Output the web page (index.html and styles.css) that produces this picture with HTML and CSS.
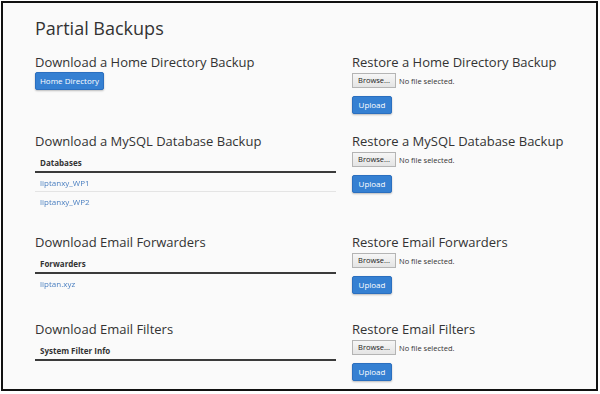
FILE: index.html
```html
<!DOCTYPE html>
<html lang="en">
<head>
<meta charset="utf-8">
<title>Partial Backups</title>
<link rel="stylesheet" href="styles.css">
</head>
<body>
<div class="frame">
  <h1 class="title">Partial Backups</h1>
  <div class="grid">
    <section class="sect">
      <h2 class="sect-title">Download a Home Directory Backup</h2>
      <button class="btn btn-home">Home Directory</button>
    </section>
    <section class="sect">
      <h2 class="sect-title">Restore a Home Directory Backup</h2>
      <div class="file-row"><span class="browse">Browse...</span><span class="no-file">No file selected.</span></div>
      <button class="btn btn-upload">Upload</button>
    </section>

    <section class="sect">
      <h2 class="sect-title">Download a MySQL Database Backup</h2>
      <table class="list">
        <thead><tr><th>Databases</th></tr></thead>
        <tbody>
          <tr><td><a class="link" href="#db1">liptanxy_WP1</a></td></tr>
          <tr><td><a class="link" href="#db2">liptanxy_WP2</a></td></tr>
        </tbody>
      </table>
    </section>
    <section class="sect">
      <h2 class="sect-title">Restore a MySQL Database Backup</h2>
      <div class="file-row"><span class="browse">Browse...</span><span class="no-file">No file selected.</span></div>
      <button class="btn btn-upload">Upload</button>
    </section>

    <section class="sect sect-mid">
      <h2 class="sect-title">Download Email Forwarders</h2>
      <table class="list">
        <thead><tr><th>Forwarders</th></tr></thead>
        <tbody>
          <tr><td><a class="link" href="#fwd">liptan.xyz</a></td></tr>
        </tbody>
      </table>
    </section>
    <section class="sect sect-mid">
      <h2 class="sect-title">Restore Email Forwarders</h2>
      <div class="file-row"><span class="browse">Browse...</span><span class="no-file">No file selected.</span></div>
      <button class="btn btn-upload">Upload</button>
    </section>

    <section class="sect sect-end">
      <h2 class="sect-title">Download Email Filters</h2>
      <table class="list">
        <thead><tr><th>System Filter Info</th></tr></thead>
        <tbody></tbody>
      </table>
    </section>
    <section class="sect sect-end">
      <h2 class="sect-title">Restore Email Filters</h2>
      <div class="file-row"><span class="browse">Browse...</span><span class="no-file">No file selected.</span></div>
      <button class="btn btn-upload">Upload</button>
    </section>
  </div>
</div>
</body>
</html>
```
FILE: styles.css
```css
html, body {
  margin: 0;
  padding: 0;
  background: #ffffff;
}

body {
  font-family: "Open Sans", "Liberation Sans", sans-serif;
  color: #333333;
}

.frame {
  box-sizing: border-box;
  margin: 1px;
  width: 597px;
  height: 390px;
  border: 2px solid #111111;
  background: #fafafa;
  padding: 13px 0 0 32px;
  overflow: hidden;
}

.title {
  margin: 0;
  font-size: 18px;
  line-height: 24px;
  font-weight: 400;
  color: #333333;
}

.grid {
  margin-top: 13px;
  display: grid;
  grid-template-columns: 301px 230px;
  column-gap: 16px;
  row-gap: 18px;
  align-items: start;
}

.sect {
  display: flex;
  flex-direction: column;
  align-items: flex-start;
}

.sect-mid {
  margin-top: 5px;
}

.sect-end {
  margin-top: 8px;
}

.sect-title {
  margin: 0;
  font-size: 13px;
  line-height: 18px;
  font-weight: 400;
  color: #333333;
  white-space: nowrap;
}

.btn {
  font-family: "Open Sans", "Liberation Sans", sans-serif;
  font-size: 8px;
  color: #ffffff;
  background: #3580d2;
  border: 1px solid #2b6fbf;
  border-radius: 2px;
  box-shadow: 0 1px 2px rgba(0, 0, 0, 0.25);
  height: 18px;
  padding: 0 6px;
  line-height: 16px;
  box-sizing: border-box;
  cursor: pointer;
}

.btn-home {
  margin-top: 1px;
  width: 69px;
  padding: 0;
}

.btn-upload {
  margin-top: 8px;
  width: 40px;
  padding: 0;
}

.file-row {
  margin-top: 2px;
  display: flex;
  align-items: center;
  height: 15px;
}

.browse {
  box-sizing: border-box;
  width: 44px;
  height: 15px;
  border: 1px solid #b4b4b4;
  background: linear-gradient(#f6f6f6, #e4e4e4);
  font-size: 7.5px;
  line-height: 13px;
  text-align: center;
  color: #222222;
}

.no-file {
  margin-left: 3px;
  font-size: 7.5px;
  color: #333333;
}

.list {
  margin-top: 3px;
  width: 301px;
  border-collapse: collapse;
}

.list th {
  height: 18px;
  padding: 0 5px;
  text-align: left;
  font-size: 8px;
  font-weight: 700;
  color: #333333;
  border-bottom: 2px solid #3a3a3a;
}

.list td {
  height: 18px;
  padding: 0 5px;
  font-size: 8px;
}

.list tbody tr + tr td {
  border-top: 1px solid #e4e4e4;
}

.link,
.link:link,
.link:visited {
  display: inline-block;
  color: #4a7fc0;
  text-decoration: none;
  will-change: transform;
}
```
